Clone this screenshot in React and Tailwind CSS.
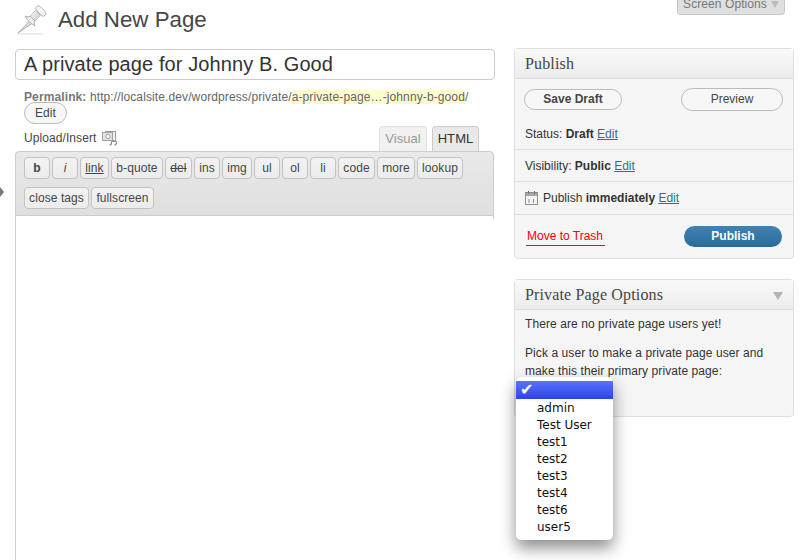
const row1 = [
  { t: "b", w: "w-[26px]", c: "font-bold" },
  { t: "i", w: "w-[26px]", c: "italic" },
  { t: "link", w: "w-[29px]", c: "underline" },
  { t: "b-quote", w: "w-[52px]" },
  { t: "del", w: "w-[27px]", c: "line-through" },
  { t: "ins", w: "w-[26px]" },
  { t: "img", w: "w-[30px]" },
  { t: "ul", w: "w-[26px]" },
  { t: "ol", w: "w-[26px]" },
  { t: "li", w: "w-[26px]" },
  { t: "code", w: "w-[37px]" },
  { t: "more", w: "w-[38px]" },
  { t: "lookup", w: "w-[46px]" },
];

const users = ["admin", "Test User", "test1", "test2", "test3", "test4", "test6", "user5"];

function QtButton({ t, w, c = "" }) {
  return (
    <button className={`${w} ${c} h-[22px] shrink-0 rounded-[4px] border border-[#c3c3c3] bg-gradient-to-b from-[#f2f2f2] to-[#ececec] text-center text-[12px] leading-[20px] text-[#464646]`}>
      {t}
    </button>
  );
}

function PinIcon() {
  return (
    <svg width="32" height="32" viewBox="0 0 32 32" strokeLinejoin="round">
      <defs>
        <linearGradient id="pin" x1="0" y1="0" x2="1" y2="1">
          <stop offset="0" stopColor="#fafafa" />
          <stop offset="1" stopColor="#c8c8c8" />
        </linearGradient>
      </defs>
      <path d="M0 30 H26" stroke="#b8b8b8" strokeWidth="1" opacity="0.5" />
      <path d="M1 29 L12.5 17 L15 19.5 Z" fill="#dcdcdc" stroke="#999" strokeWidth="0.7" />
      <path d="M12.5 12.5 L18.5 6.5 L23.5 11.5 L17.5 17.5 Z" fill="url(#pin)" stroke="#b0b0b0" strokeWidth="0.7" />
      <path d="M8 12 C11 13 12 13 13 12 L18 17 C17 18 17 20 18 22 C14 20 10 16 8 12 Z" fill="#ececec" stroke="#a0a0a0" strokeWidth="0.8" />
      <path d="M18.5 4 L21 1.8 C24 2.5 28 6.5 29.2 10.2 L26.5 12.5 C23.5 11 20 7.5 18.5 4 Z" fill="#f6f6f6" stroke="#a0a0a0" strokeWidth="0.8" />
    </svg>
  );
}

function MediaIcon() {
  return (
    <svg width="16" height="16" viewBox="0 0 16 16" fill="none" stroke="#a0a0a0" strokeWidth="1">
      <rect x="3.5" y="1.5" width="10" height="9" fill="#f1f1f1" />
      <rect x="0.5" y="2.5" width="10" height="8" fill="#e4e4e4" />
      <circle cx="6" cy="6.5" r="2.2" fill="#f8f8f8" />
      <path d="M9.5 14.5 V11.5 H14.5 V14" stroke="#8b8b8b" />
      <circle cx="8.5" cy="14.5" r="1" fill="#8b8b8b" stroke="none" />
      <circle cx="13.5" cy="14.5" r="1" fill="#8b8b8b" stroke="none" />
    </svg>
  );
}

function CalendarIcon() {
  return (
    <svg width="13" height="14" viewBox="0 0 13 14" fill="none">
      <rect x="0.5" y="1.5" width="12" height="12" fill="#f4f4f4" stroke="#8f8f8f" />
      <rect x="1" y="2" width="11" height="3" fill="#a8a8a8" />
      <path d="M3.5 0 V3 M9.5 0 V3" stroke="#777" />
      <path d="M4 8 V12 M8.5 8 V12" stroke="#8f8f8f" />
    </svg>
  );
}

function Box({ title, arrow, className = "", children }) {
  return (
    <div className={`rounded-[4px] border border-[#dfdfdf] bg-[#f5f5f5] ${className}`}>
      <div className="flex h-[30px] items-center justify-between border-b border-[#dfdfdf] bg-gradient-to-b from-[#f9f9f9] to-[#ececec] px-[10px]">
        <h3 className="font-['Liberation_Serif',serif] text-[16px] tracking-[0.15px] text-[#464646]">{title}</h3>
        {arrow && <div className="mt-[2px] h-0 w-0 border-x-[5px] border-t-[8px] border-x-transparent border-t-[#b4b4b4]" />}
      </div>
      {children}
    </div>
  );
}

export default function App() {
  return (
    <div className="relative flex h-[560px] w-[800px] overflow-hidden bg-white pl-[15px] font-['Liberation_Sans',Arial,sans-serif] text-[12px] tracking-[0.08px] text-[#333]">
      {/* collapse arrow in the gutter */}
      <div className="absolute left-0 top-[187px] h-0 w-0 border-y-[5px] border-l-[4px] border-y-transparent border-l-[#777]" />

      <div className="flex w-[480px] shrink-0 flex-col">
        <div className="flex h-[49px] items-start">
          <div className="ml-[2px] mt-[4px] w-[41px]"><PinIcon /></div>
          <h2 className="mt-[5px] text-[22.3px] leading-[30px] tracking-normal text-[#464646]">Add New Page</h2>
        </div>

        <div className="flex h-[31px] items-center rounded-[4px] border border-[#cccccc] bg-white pb-[2px] pl-[8px] text-[20px] tracking-[0.1px] text-[#333]">
          A private page for Johnny B. Good
        </div>

        <div className="ml-[9px] mt-[10px] h-[12px] leading-[15px] tracking-[0.11px] text-[#666]">
          <b className="font-bold text-[#777]">Permalink:</b> http://localsite.dev/wordpress/private/<span className="bg-[#fffbcc]">a-private-page…-johnny-b-good</span>/
        </div>
        <button className="relative ml-[9px] h-[22px] w-[43px] rounded-full border border-[#bbb] bg-[#f7f7f7] text-[12px] text-[#464646]">Edit</button>

        <div className="mt-[2px] flex h-[25px] items-end justify-between pl-[9px] pr-[16px]">
          <div className="mb-[4px] flex items-center gap-[6px] text-[#464646]">
            Upload/Insert <MediaIcon />
          </div>
          <div className="flex gap-[5px]">
            <div className="flex h-[25px] w-[48px] items-center justify-center rounded-t-[4px] border border-b-0 border-[#dfdfdf] bg-[#f1f1f1] text-[13px] text-[#999]">Visual</div>
            <div className="flex h-[25px] w-[47px] items-center justify-center rounded-t-[4px] border border-b-0 border-[#ccc] bg-[#e9e9e9] text-[13px] text-[#333]">HTML</div>
          </div>
        </div>

        <div className="flex h-[65px] w-[479px] flex-col gap-[8px] rounded-t-[4px] border border-[#ccc] bg-gradient-to-b from-[#e9e9e9] to-[#dfdfdf] px-[8px] pt-[5px]">
          <div className="flex gap-[2px]">
            {row1.map(b => <QtButton key={b.t} {...b} />)}
          </div>
          <div className="flex gap-[2px]">
            <QtButton t="close tags" w="w-[65px]" />
            <QtButton t="fullscreen" w="w-[63px]" />
          </div>
        </div>
        <div className="w-[479px] flex-1 border-l border-[#ccc]">
          <div className="ml-auto h-[3px] w-px bg-[#ccc]" />
        </div>
      </div>

      <div className="ml-[19px] flex w-[280px] shrink-0 flex-col">
        <div className="flex h-[48px] justify-end pr-[9px]">
          <div className="flex h-[15px] w-[108px] items-end justify-center gap-[4px] rounded-b-[4px] border border-t-0 border-[#c8c8c8] bg-[#dfdfdf] pb-[3px] text-[12px] text-[#777]">
            <span className="leading-[14px]">Screen Options</span>
            <div className="mb-[3px] h-0 w-0 border-x-[4px] border-t-[7px] border-x-transparent border-t-[#bbb]" />
          </div>
        </div>

        <Box title="Publish" className="h-[211px] tracking-normal">
          <div className="flex h-[40px] items-center justify-between pl-[9px] pr-[10px]">
            <button className="h-[21px] w-[98px] rounded-full border border-[#bbb] bg-[#f7f7f7] text-[12px] font-bold text-[#464646]">Save Draft</button>
            <button className="h-[23px] w-[102px] rounded-full border border-[#bbb] bg-[#f7f7f7] text-[12px] text-[#464646]">Preview</button>
          </div>
          <div className="flex h-[31px] items-center border-b border-[#dfdfdf] pl-[10px]">
            <span>Status: <b>Draft</b> <a className="text-[#21759b] underline">Edit</a></span>
          </div>
          <div className="flex h-[32px] items-center border-b border-[#dfdfdf] pl-[10px]">
            <span>Visibility: <b>Public</b> <a className="text-[#21759b] underline">Edit</a></span>
          </div>
          <div className="flex h-[33px] items-center gap-[5px] border-b border-[#dfdfdf] pl-[10px]">
            <CalendarIcon />
            <span>Publish <b>immediately</b> <a className="text-[#21759b] underline">Edit</a></span>
          </div>
          <div className="flex h-[42px] items-center justify-between px-[11px]">
            <a className="mt-[2px] border-b border-[#f00] pb-[1px] pl-[1px] pr-[2px] leading-[15px] text-[#f00]">Move to Trash</a>
            <button className="h-[21px] w-[98px] rounded-full bg-gradient-to-b from-[#3f83b4] to-[#2a6a98] text-[12px] font-bold text-white">Publish</button>
          </div>
        </Box>

        <Box title="Private Page Options" arrow className="relative mt-[20px] h-[138px]">
          <div className="px-[10px] pt-[5px] leading-[18px] text-[#333]">
            <p>There are no private page users yet!</p>
            <p className="mt-[11px]">Pick a user to make a private page user and make this their primary private page:</p>
          </div>

          {/* open select menu */}
          <div className="absolute left-[1px] top-[97px] h-[163px] w-[97px] rounded-[5px] bg-white pt-[4px] font-['DejaVu_Sans',sans-serif] text-[12px] tracking-normal text-[#111] shadow-[0_8px_16px_rgba(0,0,0,0.45)]">
            <div className="mb-[1px] flex h-[18px] items-center bg-gradient-to-b from-[#5c72f5] to-[#2a41f0] pl-[4px] text-[16px] leading-[18px] text-white">✔</div>
            {users.map(u => (
              <div key={u} className="h-[17px] pl-[21px] leading-[17px]">{u}</div>
            ))}
          </div>
        </Box>
      </div>
    </div>
  );
}
